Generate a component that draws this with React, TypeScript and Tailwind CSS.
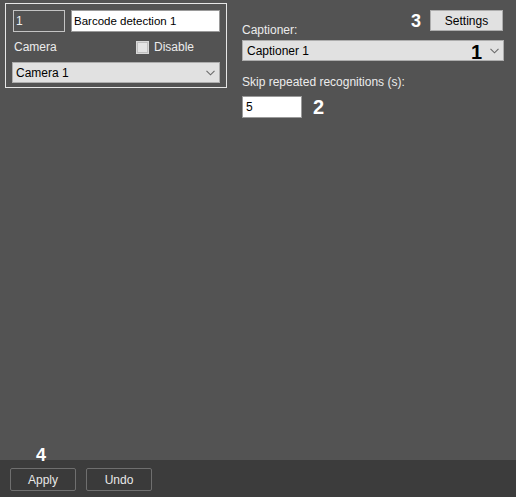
import React from 'react';

function Chevron() {
  return (
    <svg width="9" height="6" viewBox="0 0 9 6" className="text-[#6a6a6a]">
      <path d="M0.5 0.8 L4.5 4.8 L8.5 0.8" fill="none" stroke="currentColor" strokeWidth="1.1" />
    </svg>
  );
}

export default function App() {
  return (
    <div
      className="flex h-[497px] w-[516px] flex-col bg-[#535353] text-[12px] leading-[14px]"
      style={{ fontFamily: '"Liberation Sans", Arial, sans-serif' }}
    >
      {/* main area */}
      <div className="relative flex flex-1 items-start">
        {/* object panel */}
        <div className="ml-[5px] mt-[3px] flex h-[85px] w-[222px] flex-col border border-[#e6e6e6] pl-[7px] pr-[6px] pt-[6px]">
          <div className="flex gap-[6px]">
            <div className="flex h-[22px] w-[52px] items-center border border-[#c4c4c4] px-[2px] text-[#f0f0f0]">1</div>
            <div className="flex h-[22px] flex-1 items-center border border-[#9a9a9a] bg-white px-[2px] text-[11.5px] text-black">
              Barcode detection 1
            </div>
          </div>
          <div className="mt-[8px] flex h-[14px] items-center pl-[1px] text-[#ececec]">
            <span>Camera</span>
            <label className="ml-auto mr-[26px] flex items-center gap-[5px]">
              <span className="h-[13px] w-[13px] border border-[#d8d8d8] bg-[#bfbfbf] p-[1px]">
                <span className="block h-full w-full bg-[#e4e4e4]" />
              </span>
              <span>Disable</span>
            </label>
          </div>
          <div className="-ml-[1px] mt-[8px] flex h-[21px] items-center justify-between border border-[#adadad] bg-[#e1e1e1] pl-[3px] pr-[4px] text-black">
            <span>Camera 1</span>
            <Chevron />
          </div>
        </div>

        {/* captioner settings */}
        <div className="ml-[15px] mt-[10px] flex w-[262px] flex-col">
          <div className="flex h-[30px] items-start justify-between">
            <span className="pt-[13px] text-[#ececec]">Captioner:</span>
            <div className="mr-[1px] flex items-center gap-[9px]">
              <span className="text-[18px] font-bold leading-[20px] text-white">3</span>
              <button className="h-[21px] w-[73px] border border-[#adadad] bg-[#e1e1e1] text-black">Settings</button>
            </div>
          </div>
          <div className="flex h-[21px] items-center justify-between border border-[#adadad] bg-[#e1e1e1] pl-[4px] pr-[4px] text-black">
            <span>Captioner 1</span>
            <div className="flex items-center gap-[8px]">
              <span className="mt-[3px] text-[20px] font-bold leading-[20px]">1</span>
              <Chevron />
            </div>
          </div>
          <div className="mt-[14px] text-[#ececec]">Skip repeated recognitions (s):</div>
          <div className="mt-[7px] flex items-center gap-[11px]">
            <div className="flex h-[22px] w-[60px] items-center border border-[#9a9a9a] bg-white px-[3px] text-black">5</div>
            <span className="text-[20px] font-bold leading-[20px] text-white">2</span>
          </div>
        </div>

        <span className="absolute bottom-[-4px] left-[36px] text-[18px] font-bold leading-[17px] text-white">4</span>
      </div>

      {/* bottom bar */}
      <div className="flex h-[37px] items-start gap-[10px] bg-[#3c3c3c] pl-[10px] pt-[8px]">
        <button className="h-[23px] w-[66px] rounded-[2px] border border-[#6f6f6f] bg-[#3a3a3a] text-[#e8e8e8]">Apply</button>
        <button className="h-[23px] w-[66px] rounded-[2px] border border-[#6f6f6f] bg-[#3a3a3a] text-[#e8e8e8]">Undo</button>
      </div>
    </div>
  );
}
